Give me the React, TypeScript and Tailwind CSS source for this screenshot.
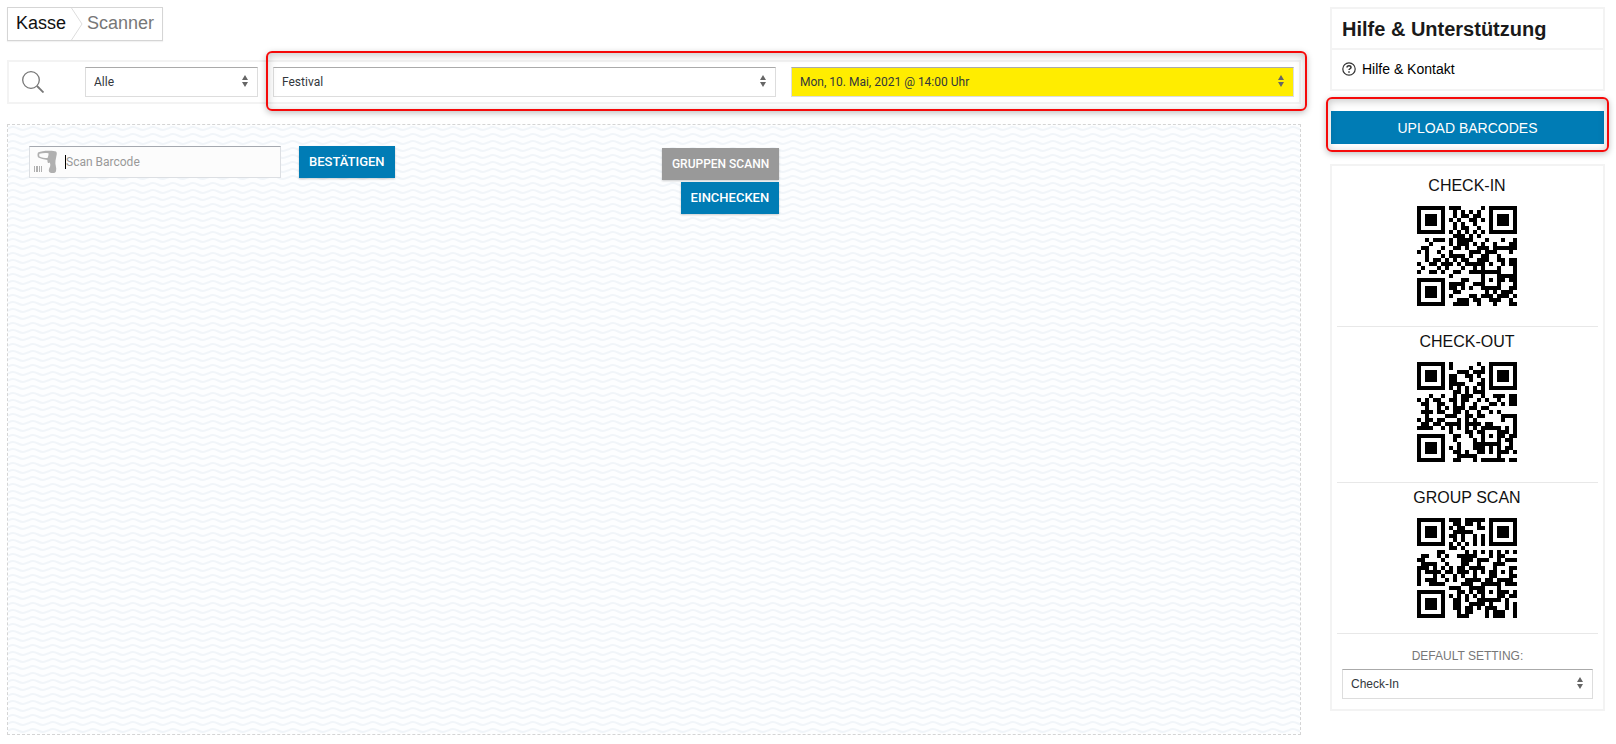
import { useId } from 'react';
import clsx from 'clsx';

// --- small QR encoder: version 2, byte mode, single block ---

const SIZE = 25;
const DATA_WORDS = 16;
const ECC_WORDS = 28;
const ECC_FORMAT = 2; // level H

const masks = [
  (r: number, c: number) => (r + c) % 2 === 0,
  (r: number) => r % 2 === 0,
  (_: number, c: number) => c % 3 === 0,
  (r: number, c: number) => (r + c) % 3 === 0,
  (r: number, c: number) => (Math.floor(r / 2) + Math.floor(c / 3)) % 2 === 0,
  (r: number, c: number) => ((r * c) % 2) + ((r * c) % 3) === 0,
  (r: number, c: number) => (((r * c) % 2) + ((r * c) % 3)) % 2 === 0,
  (r: number, c: number) => (((r + c) % 2) + ((r * c) % 3)) % 2 === 0,
];

function gfMul(a: number, b: number) {
  let out = 0;
  for (let i = 7; i >= 0; i--) {
    out = (out << 1) ^ ((out >>> 7) * 0x11d);
    out ^= ((b >>> i) & 1) * a;
  }
  return out;
}

function eccFor(data: number[]) {
  const gen = new Array(ECC_WORDS).fill(0);
  gen[ECC_WORDS - 1] = 1;
  let root = 1;
  for (let i = 0; i < ECC_WORDS; i++) {
    for (let j = 0; j < ECC_WORDS; j++) {
      gen[j] = gfMul(gen[j], root);
      if (j + 1 < ECC_WORDS) gen[j] ^= gen[j + 1];
    }
    root = gfMul(root, 2);
  }
  const rem = new Array(ECC_WORDS).fill(0);
  for (const b of data) {
    const f = b ^ rem.shift();
    rem.push(0);
    gen.forEach((g, i) => (rem[i] ^= gfMul(g, f)));
  }
  return rem;
}

function encode(text: string) {
  let bits = '0100' + text.length.toString(2).padStart(8, '0');
  for (const ch of text) bits += ch.charCodeAt(0).toString(2).padStart(8, '0');
  bits += '0000';
  const data: number[] = [];
  for (let i = 0; i < bits.length; i += 8) data.push(parseInt(bits.slice(i, i + 8), 2));
  for (let pad = 0xec; data.length < DATA_WORDS; pad ^= 0xfd) data.push(pad);
  return [...data, ...eccFor(data)];
}

function penalty(grid: boolean[][]) {
  let score = 0;
  let dark = 0;
  for (let dir = 0; dir < 2; dir++) {
    for (let a = 0; a < SIZE; a++) {
      let line = '';
      for (let b = 0; b < SIZE; b++) line += (dir ? grid[b][a] : grid[a][b]) ? '1' : '0';
      for (const run of line.match(/0{5,}|1{5,}/g) ?? []) score += run.length - 2;
      for (let i = 0; i + 11 <= SIZE; i++) {
        const s = line.slice(i, i + 11);
        if (s === '10111010000' || s === '00001011101') score += 40;
      }
    }
  }
  for (let r = 0; r < SIZE; r++) {
    for (let c = 0; c < SIZE; c++) {
      if (grid[r][c]) dark++;
      if (r && c && grid[r][c] === grid[r - 1][c] && grid[r][c] === grid[r][c - 1] && grid[r][c] === grid[r - 1][c - 1]) score += 3;
    }
  }
  return score + Math.floor(Math.abs((dark * 20) / (SIZE * SIZE) - 10)) * 10;
}

function build(text: string, mask: number) {
  const grid = Array.from({ length: SIZE }, () => new Array<boolean>(SIZE).fill(false));
  const fixed = Array.from({ length: SIZE }, () => new Array<boolean>(SIZE).fill(false));
  const put = (r: number, c: number, on: boolean) => {
    if (r < 0 || c < 0 || r >= SIZE || c >= SIZE) return;
    grid[r][c] = on;
    fixed[r][c] = true;
  };

  for (let i = 0; i < SIZE; i++) {
    put(6, i, i % 2 === 0);
    put(i, 6, i % 2 === 0);
  }
  for (const [r, c] of [[3, 3], [3, SIZE - 4], [SIZE - 4, 3]]) {
    for (let y = -4; y <= 4; y++) {
      for (let x = -4; x <= 4; x++) {
        const d = Math.max(Math.abs(x), Math.abs(y));
        put(r + y, c + x, d !== 2 && d !== 4);
      }
    }
  }
  for (let y = -2; y <= 2; y++) {
    for (let x = -2; x <= 2; x++) put(18 + y, 18 + x, Math.max(Math.abs(x), Math.abs(y)) !== 1);
  }

  const fmt = (ECC_FORMAT << 3) | mask;
  let rem = fmt;
  for (let i = 0; i < 10; i++) rem = (rem << 1) ^ ((rem >>> 9) * 0x537);
  const info = ((fmt << 10) | rem) ^ 0x5412;
  const bit = (i: number) => ((info >>> i) & 1) === 1;
  for (let i = 0; i < 6; i++) put(i, 8, bit(i));
  put(7, 8, bit(6));
  put(8, 8, bit(7));
  put(8, 7, bit(8));
  for (let i = 9; i < 15; i++) put(8, 14 - i, bit(i));
  for (let i = 0; i < 8; i++) put(8, SIZE - 1 - i, bit(i));
  for (let i = 8; i < 15; i++) put(SIZE - 15 + i, 8, bit(i));
  put(SIZE - 8, 8, true);

  const words = encode(text);
  let n = 0;
  for (let right = SIZE - 1; right >= 1; right -= 2) {
    if (right === 6) right = 5;
    for (let v = 0; v < SIZE; v++) {
      for (let j = 0; j < 2; j++) {
        const c = right - j;
        const r = ((right + 1) & 2) === 0 ? SIZE - 1 - v : v;
        if (fixed[r][c]) continue;
        const on = n < words.length * 8 && ((words[n >>> 3] >>> (7 - (n & 7))) & 1) === 1;
        grid[r][c] = on !== masks[mask](r, c);
        n++;
      }
    }
  }
  return grid;
}

function QrCode({ value }: { value: string }) {
  const grids = masks.map((_, i) => build(value, i));
  const best = grids.reduce((a, b) => (penalty(b) < penalty(a) ? b : a));
  const d = best.flatMap((row, r) => row.map((on, c) => (on ? `M${c} ${r}h1v1h-1z` : ''))).join('');
  return (
    <svg viewBox="0 0 25 25" className="w-[100px] h-[100px]" shapeRendering="crispEdges" role="img" aria-label={value}>
      <path d={d} />
    </svg>
  );
}

interface SelectProps {
  label: string;
  options: string[];
  className?: string;
  highlight?: boolean;
}

function Select({ label, options, className, highlight }: SelectProps) {
  return (
    <div className={clsx('relative', className)}>
      <select
        aria-label={label}
        className={clsx(
          'block w-full h-[30px] appearance-none border border-[#ddd] border-t-[#aaa] pl-2 pr-6 text-xs text-[#32373c] outline-none',
          highlight ? 'bg-[#ffed00]' : 'bg-white'
        )}
      >
        {options.map((o) => (
          <option key={o}>{o}</option>
        ))}
      </select>
      <svg viewBox="0 0 6 12" className="absolute right-[10px] top-2 w-[6px] h-3 pointer-events-none fill-[#666]">
        <path d="M3 0 6 5H0zM3 12 0 7h6z" />
      </svg>
    </div>
  );
}

function Waves() {
  const id = useId();
  return (
    <svg className="absolute inset-0 w-full h-full pointer-events-none" aria-hidden="true">
      <defs>
        <pattern id={id} width="20" height="7" patternUnits="userSpaceOnUse">
          <path d="M-5 5C-1 5 1 2 5 2S11 5 15 5 21 2 25 2" fill="none" stroke="#f1f5f9" strokeWidth="2" />
        </pattern>
      </defs>
      <rect width="100%" height="100%" fill={`url(#${id})`} />
    </svg>
  );
}

function Marker({ className }: { className: string }) {
  return (
    <div
      className={clsx(
        'absolute rounded-md border-2 border-[#f50a0a] pointer-events-none shadow-[0_2px_6px_rgba(0,0,0,0.25),inset_0_2px_8px_rgba(0,0,0,0.22)]',
        className
      )}
    />
  );
}

const codes = [
  { title: 'CHECK-IN', value: 'checkin' },
  { title: 'CHECK-OUT', value: 'checkout' },
  { title: 'GROUP SCAN', value: 'groupscan' },
];

const buttonClass = 'h-8 px-[10px] font-medium text-white shadow-[0_1px_2px_rgba(0,0,0,0.2)]';

export default function App() {
  return (
    <div className="min-h-screen flex gap-[29px] bg-white pt-[7px] pl-[7px] pr-[11px] pb-[9px] font-[Roboto,sans-serif]">
      <main className="flex-1 min-w-0 flex flex-col">
        <nav className="self-start flex h-[34px] border border-[#d5d5d5] px-2 font-['Liberation_Sans',Arial,sans-serif] text-lg leading-[30px] shadow-[0_1px_1px_rgba(0,0,0,0.05)]">
          <a href="#kasse" className="text-[#111]">Kasse</a>
          <svg viewBox="0 0 12 32" className="w-3 h-8 ml-[5px] mr-1 fill-none stroke-[#ddd]">
            <path d="M.5 0 11 16 .5 32" />
          </svg>
          <span className="text-[#777]">Scanner</span>
        </nav>

        <div className="relative mt-[19px] flex items-center border-2 border-[#f3f3f3] py-[5px] pl-[13px] pr-[5px]">
          <svg viewBox="0 0 22 22" className="w-[22px] h-[22px] mr-[41px] fill-none stroke-[#777]" strokeWidth="1.3">
            <circle cx="9" cy="9" r="8.3" />
            <path d="m15 15 6.5 6.5" strokeWidth="1.8" />
          </svg>
          <Select label="Kategorie" options={['Alle']} className="w-[173px] mr-[15px]" />
          <Select label="Event" options={['Festival']} className="flex-1 mr-[15px]" />
          <Select label="Datum" options={['Mon, 10. Mai, 2021 @ 14:00 Uhr']} className="flex-1" highlight />
          <Marker className="left-[257px] -right-[8px] -top-[11px] -bottom-[9px]" />
        </div>

        <section className="relative mt-5 flex-1 border border-dashed border-[#d5d5d5] bg-[#fdfeff]">
          <Waves />
          <div className="relative w-[60%] flex items-start justify-between pl-[21px] pr-1 pt-[21px]">
            <form className="flex gap-[18px]" onSubmit={(e) => e.preventDefault()}>
              <label className="flex items-center w-[252px] h-8 border border-[#dcdfe3] border-t-[#a5a9b0] bg-[#fcfcfc] pl-1">
                <svg viewBox="0 0 24 24" className="w-6 h-6 mr-[7px] fill-[#b0b0b0]">
                  <path
                    fillRule="evenodd"
                    d="M4 2.5C8 .6 15 .5 21 1.2c1.6.2 2 1.5 1.7 3.2l-1.2 6.3c-.3 1.8-.1 3.5.3 5.3.5 1.7.6 3.5.2 5.2C21.6 22.6 20.5 23 18.5 23s-3.7-.6-3.7-2.5c0-2.5 1.7-3.5 1.5-6l-.5-2.3c-.8 1.4-2 .9-2.2-.3l-.3-2C10 9.4 6.5 8.7 4.3 7.6c-1-1.5-1-3.5-.3-5.1zM5.4 3.7c-.4 1-.3 1.9.1 2.7 2 1 5 1.5 8 1.7.8-2 1.2-3.7 1-4.9-3.1-.3-6.2-.2-9.1.5z"
                  />
                  <path d="M0 16h1v6H0zM2 16h2v6H2zM5 16h1v6H5zM7 16h1v6H7z" />
                </svg>
                <span className="w-px h-[14px] bg-black" />
                <input type="text" aria-label="Scan Barcode" placeholder="Scan Barcode" className="flex-1 min-w-0 text-xs placeholder:text-[#999] outline-none bg-transparent" />
              </label>
              <button type="submit" className={clsx(buttonClass, 'text-[13px] bg-[#007cb5]')}>BESTÄTIGEN</button>
            </form>
            <div className="flex flex-col items-end gap-0.5 pt-0.5">
              <button type="button" className={clsx(buttonClass, 'text-xs bg-[#999]')}>GRUPPEN SCANN</button>
              <button type="button" className={clsx(buttonClass, 'text-[13px] bg-[#007cb5]')}>EINCHECKEN</button>
            </div>
          </div>
        </section>
      </main>

      <aside className="w-[275px] shrink-0 font-['Liberation_Sans',Arial,sans-serif]">
        <div className="border-2 border-[#f3f3f3]">
          <h2 className="h-[41px] pl-[10px] text-xl leading-10 font-bold text-[#1a1a1a] border-b-2 border-[#f3f3f3]">Hilfe &amp; Unterstützung</h2>
          <a href="#hilfe" className="flex items-center h-[39px] pl-[10px] pb-0.5 gap-[6px] text-sm text-black">
            <svg viewBox="0 0 14 14" className="w-[14px] h-[14px] fill-none stroke-[#333]" strokeWidth="1.2">
              <circle cx="7" cy="7" r="6.2" />
              <path d="M5 5.6C5 4.4 5.9 3.7 7 3.7s2 .7 2 1.7c0 1.3-2 1.4-2 2.7" strokeWidth="1.5" />
              <path d="M7 9.2v1.5" strokeWidth="1.5" />
            </svg>
            Hilfe &amp; Kontakt
          </a>
        </div>

        <div className="relative mt-5 px-px">
          <button type="button" className="block w-full h-[33px] bg-[#007cb5] text-sm text-white">UPLOAD BARCODES</button>
          <Marker className="-left-[4px] -right-[4px] -top-[14px] -bottom-[8px]" />
        </div>

        <div className="mt-5 border-2 border-[#f3f3f3] px-[5px] pt-[5px] pb-[10px]">
          <ul>
            {codes.map((code) => (
              <li key={code.title} className="flex flex-col items-center border-b border-[#e8e8e8] pt-[3px] pr-px pb-5 last:pb-[15px]">
                <h3 className="mb-2 text-base leading-6 text-[#111]">{code.title}</h3>
                <QrCode value={code.value} />
              </li>
            ))}
          </ul>
          <p className="mt-3 mb-[3px] text-center text-xs leading-5 text-[#777]">DEFAULT SETTING:</p>
          <Select label="Default setting" options={['Check-In', 'Check-Out', 'Group Scan']} className="mx-[5px]" />
        </div>
      </aside>
    </div>
  );
}
